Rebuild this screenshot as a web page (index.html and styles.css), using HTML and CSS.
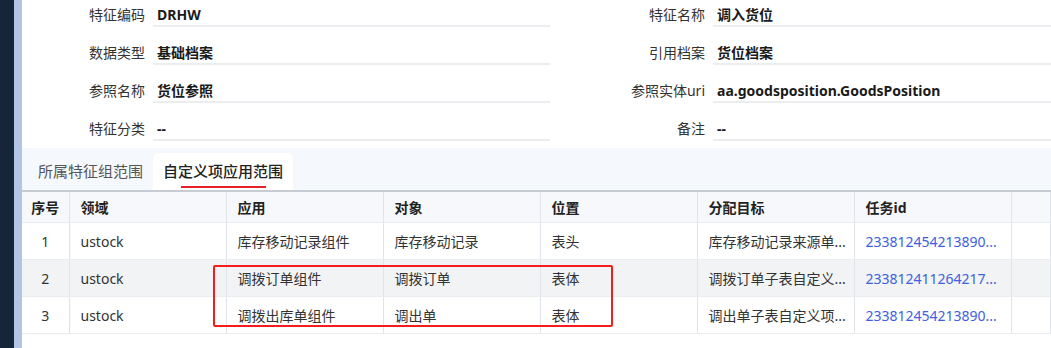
FILE: index.html
```html
<!DOCTYPE html>
<html lang="zh-CN">
<head>
    <meta charset="UTF-8">
    <meta name="viewport" content="width=device-width, initial-scale=1.0">
    <title>特征详情</title>
    <link rel="stylesheet" href="styles.css">
</head>
<body>
    <div class="sidebar"></div>
    <div class="rail"></div>
    <div class="main">
        <div class="attrs">
            <div class="field">
                <span class="label">特征编码</span>
                <span class="value">DRHW</span>
            </div>
            <div class="field">
                <span class="label">特征名称</span>
                <span class="value">调入货位</span>
            </div>
            <div class="field">
                <span class="label">数据类型</span>
                <span class="value">基础档案</span>
            </div>
            <div class="field">
                <span class="label">引用档案</span>
                <span class="value">货位档案</span>
            </div>
            <div class="field">
                <span class="label">参照名称</span>
                <span class="value">货位参照</span>
            </div>
            <div class="field">
                <span class="label">参照实体uri</span>
                <span class="value">aa.goodsposition.GoodsPosition</span>
            </div>
            <div class="field">
                <span class="label">特征分类</span>
                <span class="value">--</span>
            </div>
            <div class="field">
                <span class="label">备注</span>
                <span class="value">--</span>
            </div>
        </div>

        <div class="tabs">
            <div class="tab">所属特征组范围</div>
            <div class="tab active">自定义项应用范围</div>
        </div>

        <div class="table-wrap">
            <table class="grid">
                <colgroup>
                    <col class="col-no">
                    <col class="col-std">
                    <col class="col-std">
                    <col class="col-std">
                    <col class="col-std">
                    <col class="col-std">
                    <col class="col-std">
                    <col>
                </colgroup>
                <thead>
                    <tr>
                        <th class="no">序号</th>
                        <th>领域</th>
                        <th>应用</th>
                        <th>对象</th>
                        <th>位置</th>
                        <th>分配目标</th>
                        <th>任务id</th>
                        <th></th>
                    </tr>
                </thead>
                <tbody>
                    <tr>
                        <td class="no">1</td>
                        <td>ustock</td>
                        <td>库存移动记录组件</td>
                        <td>库存移动记录</td>
                        <td>表头</td>
                        <td class="short">库存移动记录来源单...</td>
                        <td class="short link">233812454213890...</td>
                        <td></td>
                    </tr>
                    <tr class="striped">
                        <td class="no">2</td>
                        <td>ustock</td>
                        <td>调拨订单组件</td>
                        <td>调拨订单</td>
                        <td>表体</td>
                        <td class="short">调拨订单子表自定义...</td>
                        <td class="short link">233812411264217...</td>
                        <td></td>
                    </tr>
                    <tr>
                        <td class="no">3</td>
                        <td>ustock</td>
                        <td>调拨出库单组件</td>
                        <td>调出单</td>
                        <td>表体</td>
                        <td class="short">调出单子表自定义项...</td>
                        <td class="short link">233812454213890...</td>
                        <td></td>
                    </tr>
                </tbody>
            </table>
            <div class="highlight"></div>
        </div>
    </div>
</body>
</html>
```

FILE: styles.css
```css
body {
    margin: 0;
    height: 100vh;
    overflow: hidden;
    display: flex;
    font-family: "Noto Sans", "Noto Sans CJK SC", sans-serif;
    font-size: 14px;
    color: #333;
    background: #fff;
}

.sidebar {
    width: 14px;
    background-color: #172538;
}

.rail {
    width: 8px;
    background-color: #b3c5e7;
}

.main {
    flex: 1;
    display: flex;
    flex-direction: column;
    min-width: 0;
}

/* attribute form */
.attrs {
    display: grid;
    grid-template-columns: 528px 1fr;
    column-gap: 32px;
    margin-top: -11px;
    padding-bottom: 7px;
}

.field {
    display: grid;
    grid-template-columns: 131px 1fr;
}

.field .label,
.field .value {
    padding-top: 16px;
    line-height: 20px;
    white-space: nowrap;
}

.field .label {
    text-align: right;
    padding-right: 8px;
    color: #333;
    padding-bottom: 2px;
}

.field .value {
    padding-left: 4px;
    font-weight: bold;
    color: #1a1a1a;
    border-bottom: 2px solid #ebedf0;
}

/* tabs */
.tabs {
    height: 42px;
    display: flex;
    align-items: flex-end;
    padding-left: 6px;
    background-color: #f5f8fd;
}

.tab {
    height: 37px;
    line-height: 36px;
    padding: 0 10px;
    font-size: 15px;
    color: #555;
}

.tab.active {
    position: relative;
    background: #fff;
    border-radius: 6px 6px 0 0;
    color: #222;
    font-weight: 500;
}

.tab.active::after {
    content: "";
    position: absolute;
    left: 50%;
    bottom: 2px;
    width: 85px;
    height: 2px;
    margin-left: -42px;
    background-color: #e8202a;
}

/* table */
.table-wrap {
    position: relative;
}

.grid {
    width: 100%;
    table-layout: fixed;
    border-collapse: collapse;
    border-top: 2px solid #c6cbd4;
}

.col-no {
    width: 47px;
}

.col-std {
    width: 157px;
}

.grid th,
.grid td {
    padding: 0 11px;
    text-align: left;
    white-space: nowrap;
    border-right: 1px solid #e0e3e9;
    border-bottom: 1px solid #e9ecf1;
}

.grid th {
    height: 30px;
    background-color: #f6f8fb;
    font-weight: bold;
    color: #222;
}

.grid td {
    height: 36px;
}

.grid td.short {
    padding-right: 4px;
}

.grid .no {
    text-align: center;
    padding: 0;
    box-shadow: 1px 0 2px rgba(0, 0, 0, 0.06);
}

.grid tr.striped td {
    background-color: #f2f3f5;
}

.grid td.link {
    color: #3f60df;
}

.highlight {
    position: absolute;
    left: 191px;
    top: 75px;
    width: 396px;
    height: 58px;
    border: 2px solid #f41c1c;
    border-radius: 2px;
}
```
